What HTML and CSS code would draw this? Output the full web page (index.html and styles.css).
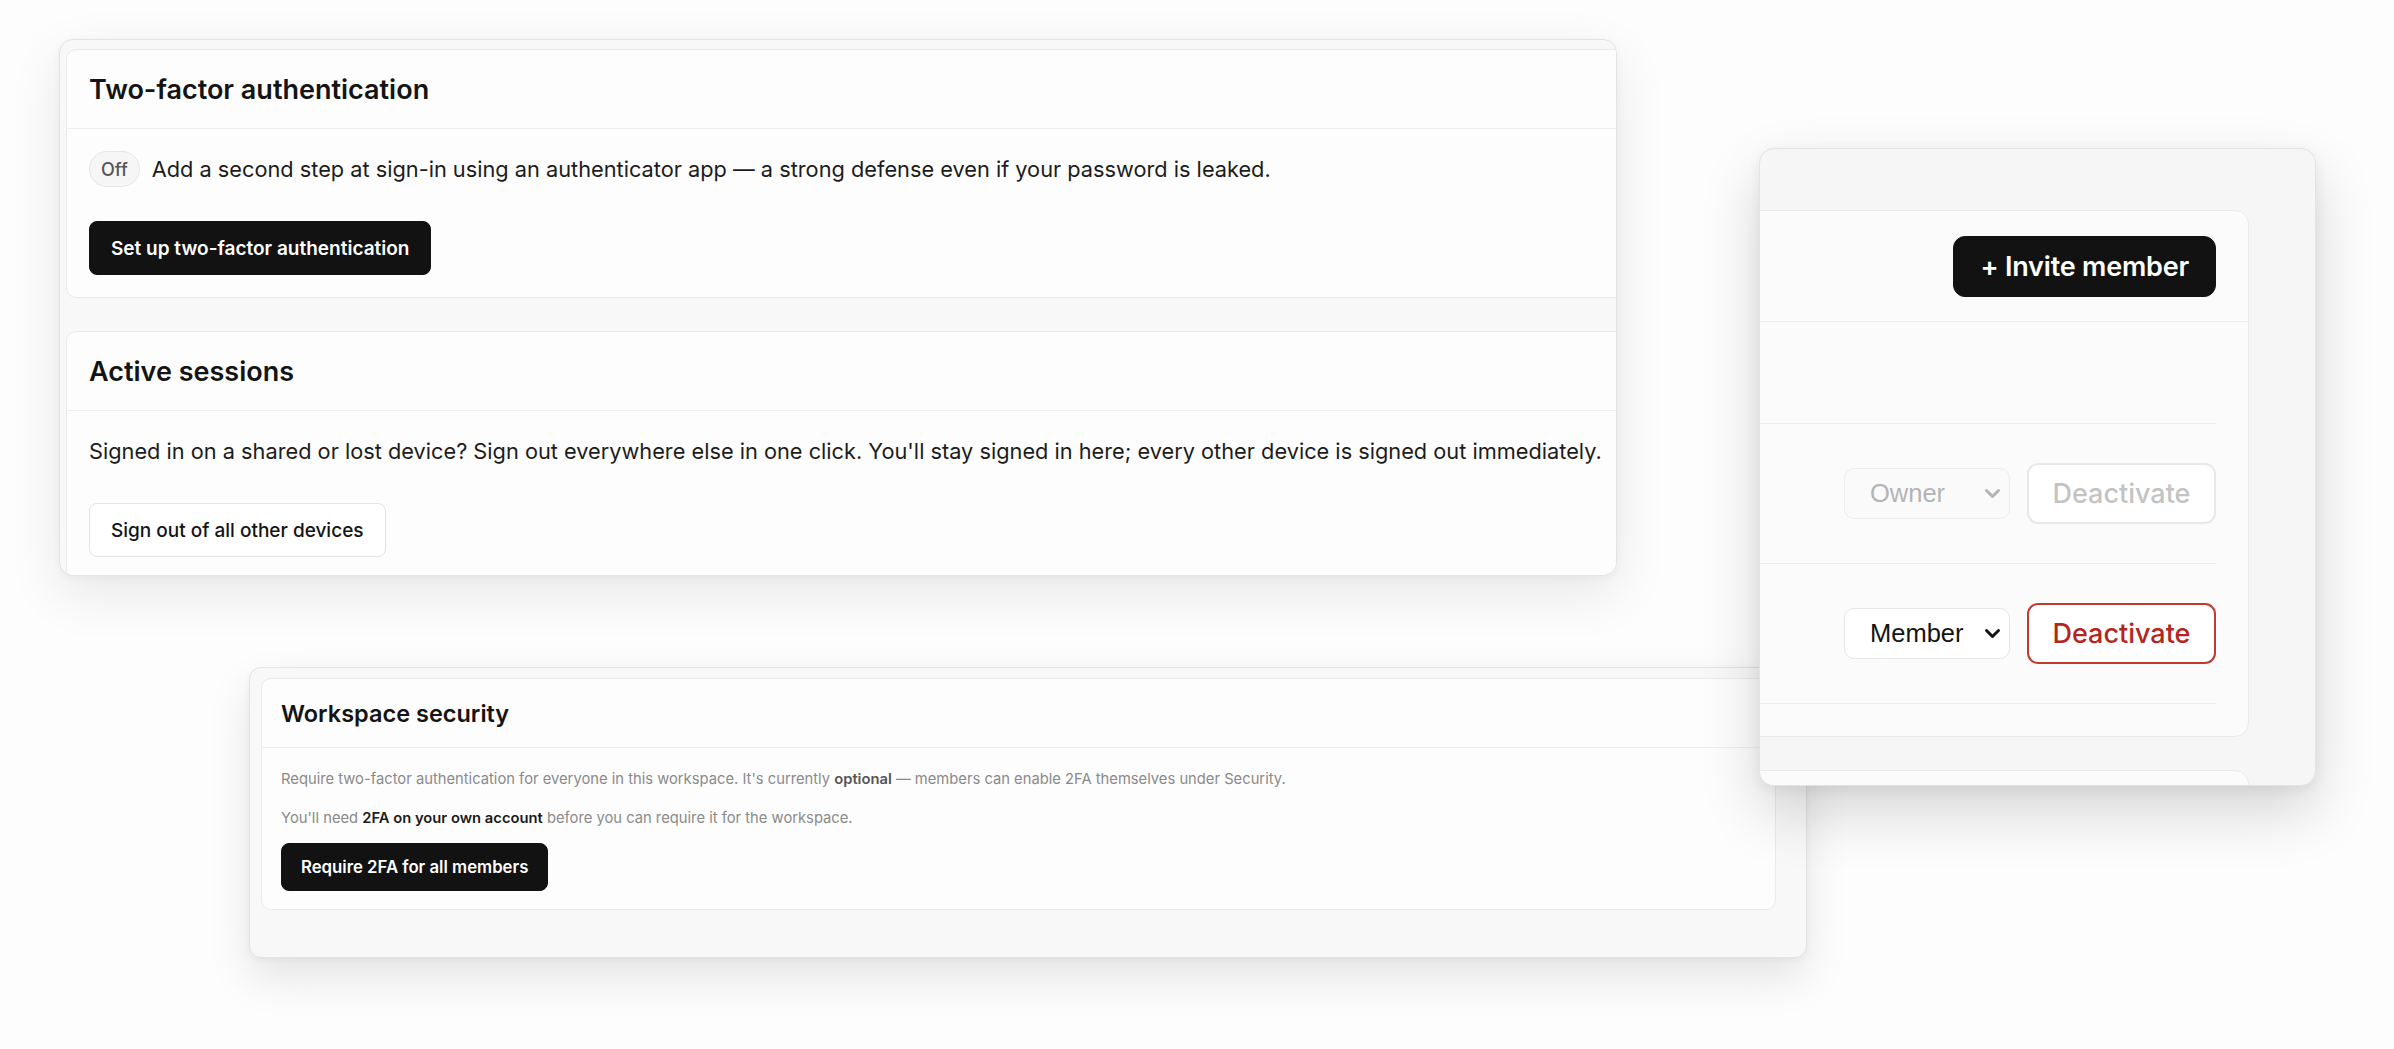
FILE: index.html
```html
<!DOCTYPE html>
<html lang="en">
<head>
  <meta charset="UTF-8">
  <title>Security settings</title>
  <link rel="stylesheet" href="styles.css">
</head>
<body>
<div class="desk">

  <section class="win win-account">
    <div class="page">
      <div class="card">
        <div class="card-head">
          <h2>Two-factor authentication</h2>
        </div>
        <div class="card-body">
          <div class="status">
            <span class="pill">Off</span>
            <span>Add a second step at sign-in using an authenticator app — a strong defense even if your password is leaked.</span>
          </div>
          <button class="btn btn-dark">Set up two-factor authentication</button>
        </div>
      </div>

      <div class="card">
        <div class="card-head">
          <h2>Active sessions</h2>
        </div>
        <div class="card-body">
          <p class="lead">Signed in on a shared or lost device? Sign out everywhere else in one click. You'll stay signed in here; every other device is signed out immediately.</p>
          <button class="btn btn-light">Sign out of all other devices</button>
        </div>
      </div>
    </div>
  </section>

  <section class="win win-workspace">
    <div class="page">
      <div class="card">
        <div class="card-head">
          <h2>Workspace security</h2>
        </div>
        <div class="card-body">
          <p>Require two-factor authentication for everyone in this workspace. It's currently <b>optional</b> — members can enable 2FA themselves under Security.</p>
          <p>You'll need <b class="em">2FA on your own account</b> before you can require it for the workspace.</p>
          <button class="btn btn-dark">Require 2FA for all members</button>
        </div>
      </div>
    </div>
  </section>

  <section class="win win-members">
    <div class="page">
      <div class="card">
        <div class="card-head">
          <button class="btn btn-dark">+ Invite member</button>
        </div>
        <div class="members">
          <div class="member"></div>
          <div class="member">
            <div class="select is-disabled">
              <span>Owner</span>
              <svg width="17" height="11" viewBox="0 0 17 11"><polyline points="2.5,2.5 8.5,8.5 14.5,2.5"/></svg>
            </div>
            <button class="btn-deactivate is-disabled">Deactivate</button>
          </div>
          <div class="member">
            <div class="select">
              <span>Member</span>
              <svg width="17" height="11" viewBox="0 0 17 11"><polyline points="2.5,2.5 8.5,8.5 14.5,2.5"/></svg>
            </div>
            <button class="btn-deactivate">Deactivate</button>
          </div>
        </div>
      </div>
      <div class="card card-next"></div>
    </div>
  </section>

</div>
</body>
</html>
```

FILE: styles.css
```css
body {
  margin: 0;
  background: #fdfdfd;
  font-family: Inter, "Noto Sans", sans-serif;
  color: #161616;
}

.desk {
  position: relative;
  width: 2394px;
  height: 1049px;
  overflow: hidden;
}

/* floating screenshots */
.win {
  position: absolute;
  box-sizing: border-box;
  border: 1px solid #e3e3e3;
  overflow: hidden;
}

.card {
  background: #fdfdfd;
  border: 1px solid #eaeaea;
  border-radius: 10px;
}

.card-head {
  display: flex;
  align-items: center;
  border-bottom: 1px solid #efefef;
}

.card-head h2 {
  margin: 0;
  font-weight: 600;
  color: #141414;
}

.btn {
  box-sizing: border-box;
  font-family: inherit;
  font-weight: 600;
  border-radius: 8px;
  cursor: pointer;
}

.btn-dark {
  background: #121212;
  border: 1px solid #121212;
  color: #fff;
}

.btn-light {
  background: #fff;
  border: 1px solid #e3e3e3;
  color: #141414;
  font-weight: 500;
}

/* account security */
.win-account {
  left: 59px;
  top: 39px;
  width: 1558px;
  height: 537px;
  border-radius: 14px;
  background: #f8f8f8;
  box-shadow: 0 18px 54px rgba(0, 0, 0, .09), 0 2px 8px rgba(0, 0, 0, .04);
}

.win-account .page {
  padding: 9px 0 0 6px;
}

.win-account .card {
  margin-right: -14px;
}

.win-account .card + .card {
  margin-top: 33px;
}

.win-account .card-head {
  height: 78px;
  padding: 0 22px;
}

.win-account .card-head h2 {
  font-size: 27px;
}

.win-account .card-body {
  display: flex;
  flex-direction: column;
  align-items: flex-start;
  gap: 34px;
  padding: 22px;
}

.win-account .btn {
  height: 54px;
  padding: 0 21px;
  font-size: 19px;
}

.status {
  display: flex;
  align-items: center;
  gap: 12px;
  font-size: 21.75px;
  color: #1c1c1c;
}

.pill {
  display: inline-flex;
  align-items: center;
  box-sizing: border-box;
  height: 36px;
  padding: 0 11px;
  border: 1px solid #e6e6e6;
  border-radius: 18px;
  background: #f6f6f6;
  font-size: 18px;
  font-weight: 500;
  color: #555;
}

.lead {
  margin: 0;
  font-size: 21.75px;
  line-height: 36px;
  color: #1c1c1c;
}

/* workspace security */
.win-workspace {
  left: 249px;
  top: 667px;
  width: 1558px;
  height: 291px;
  border-radius: 12px;
  background: #f8f8f8;
  box-shadow: 0 20px 44px rgba(0, 0, 0, .10), 0 2px 6px rgba(0, 0, 0, .04);
}

.win-workspace .page {
  padding: 10px 30px 0 11px;
}

.win-workspace .card-head {
  height: 68px;
  padding: 0 19px;
}

.win-workspace .card-head h2 {
  font-size: 23.5px;
}

.win-workspace .card-body {
  padding: 20px 19px 18px;
}

.win-workspace p {
  margin: 0;
  font-size: 14.75px;
  line-height: 22px;
  color: #8a8a8a;
}

.win-workspace p + p {
  margin-top: 17px;
}

.win-workspace b {
  font-weight: 600;
  color: #555;
}

.win-workspace b.em {
  color: #1a1a1a;
}

.win-workspace .btn {
  display: block;
  margin-top: 14px;
  height: 48px;
  padding: 0 19px;
  font-size: 16.75px;
}

/* members */
.win-members {
  left: 1759px;
  top: 148px;
  width: 557px;
  height: 638px;
  border-radius: 15px;
  background: #f6f6f6;
  box-shadow: 0 26px 60px rgba(0, 0, 0, .16), 0 4px 14px rgba(0, 0, 0, .06);
}

.win-members .page {
  padding: 61px 66px 0 0;
}

.win-members .card {
  margin-left: -300px;
  border-radius: 14px;
  background: #fbfbfb;
}

.win-members .card-head {
  justify-content: flex-end;
  padding: 25px 32px 24px;
}

.win-members .card-head .btn {
  height: 61px;
  padding: 0 26px;
  border-radius: 12px;
  font-size: 27px;
  letter-spacing: -.2px;
}

.members {
  padding: 0 32px 32px 0;
}

.member {
  display: flex;
  justify-content: flex-end;
  align-items: center;
  gap: 17px;
  height: 139px;
  border-bottom: 1px solid #ececec;
}

.member:first-child {
  height: 101px;
}

.select {
  display: flex;
  align-items: center;
  box-sizing: border-box;
  width: 166px;
  height: 51px;
  padding: 0 8px 0 25px;
  border: 1.5px solid #e6e6e6;
  border-radius: 10px;
  background: #fff;
  font: 25.5px "Liberation Sans", Arial, sans-serif;
  color: #141414;
}

.select svg {
  margin-left: auto;
  fill: none;
  stroke: #141414;
  stroke-width: 3;
  stroke-linecap: round;
  stroke-linejoin: round;
}

.select.is-disabled {
  border-color: #ededed;
  background: #fafafa;
  color: #b4b4b4;
}

.select.is-disabled svg {
  stroke: #b4b4b4;
}

.btn-deactivate {
  box-sizing: border-box;
  width: 189px;
  height: 61px;
  border: 2px solid #bf3a30;
  border-radius: 11px;
  background: #fff;
  font-family: inherit;
  font-size: 27px;
  font-weight: 500;
  color: #b3261e;
}

.btn-deactivate.is-disabled {
  border-color: #e8e8e8;
  color: #c3c3c3;
}

.card-next {
  height: 120px;
  margin-top: 33px;
}
```
